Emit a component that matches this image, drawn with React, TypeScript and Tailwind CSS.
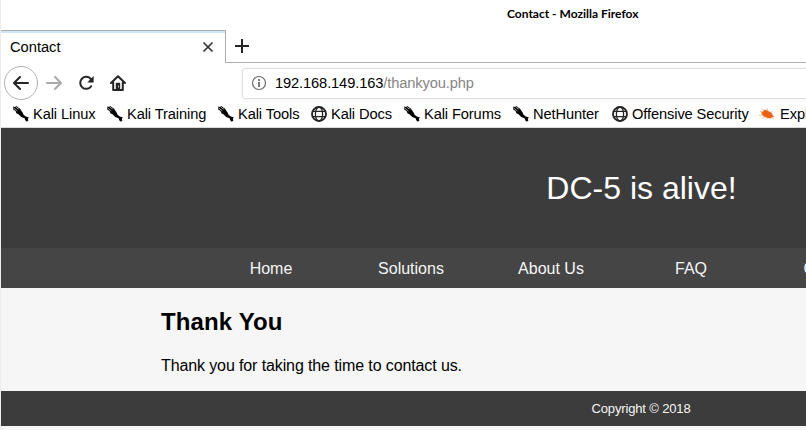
import type { ReactNode } from "react";

function KaliIcon() {
  return (
    <svg className="block h-4 w-4 shrink-0" viewBox="0 0 16 16">
      <path d="M0 .5 2 1l1.2-1L5 1.2l1.8 1 1.2 2 1.6 2.3 1 2.3 2.2 1.8 3.2.9-1.2 1.2.6 1.8-1.6 1.3-1.6-1.6-.6-2-3.4-1.3-2.4-2.4-2.4-1.2L2.6 5 .2 3.6z" fill="#050505" />
      <path d="M.2 1.6 4.4 5M2.6.8l2.8 2.4M4.8 1.3l1.6 1.4" stroke="#fff" strokeWidth=".6" fill="none" />
    </svg>
  );
}

function GlobeIcon() {
  return (
    <svg className="block h-4 w-4 shrink-0" viewBox="0 0 16 16" fill="none" stroke="#252525">
      <circle cx="8" cy="8" r="7" strokeWidth="1.9" />
      <ellipse cx="8" cy="8" rx="3.6" ry="7" strokeWidth="1.3" />
      <path d="M1.5 5.4h13M1.5 10.6h13" strokeWidth="1.3" />
    </svg>
  );
}

function ExploitIcon() {
  return (
    <svg className="-ml-px mr-px block h-4 w-4 shrink-0" viewBox="0 0 16 16">
      <path d="M.8 5 4 6.2M2.5 2.6 6 5.5M8 2l.6 3M0 9.7 4 8.5M3 12.6l3-2.1M8 13.3l1-1.5M13 4.7l-1 2.5M15.2 13 12 11" stroke="#f8b58e" strokeWidth=".9" />
      <path d="m2.2 6.5 2.6-1.4.8-1.6 3 1.2 2.2 1 2.4 2 .5 1.9 1.6 1.4-2.5.3-1 1.3-3-.6-4-1.4L3.2 8.8z" fill="#ec6316" />
    </svg>
  );
}

const bookmarks: { label: string; icon: ReactNode; width: string }[] = [
  { label: "Kali Linux", icon: <KaliIcon />, width: "w-[94px]" },
  { label: "Kali Training", icon: <KaliIcon />, width: "w-[111px]" },
  { label: "Kali Tools", icon: <KaliIcon />, width: "w-[93px]" },
  { label: "Kali Docs", icon: <GlobeIcon />, width: "w-[93px]" },
  { label: "Kali Forums", icon: <KaliIcon />, width: "w-[109px]" },
  { label: "NetHunter", icon: <KaliIcon />, width: "w-[99px]" },
  { label: "Offensive Security", icon: <GlobeIcon />, width: "w-[148px]" },
  { label: "Exploit-DB", icon: <ExploitIcon />, width: "w-[110px]" },
];

function TabStrip() {
  return (
    <div className="flex h-[33px]">
      <div className="flex h-[33px] w-[225px] shrink-0 items-center justify-between border-t border-r border-[#adadad] pr-[11px] pl-[9px] shadow-[inset_0_2px_0_#cce6fa]">
        <span className="leading-[33px]">Contact</span>
        <svg className="h-3 w-3" viewBox="0 0 12 12" stroke="#333" strokeWidth="1.7">
          <path d="m1.5 1.5 9 9m0-9-9 9" />
        </svg>
      </div>
      <div className="flex grow items-center border-b border-[#adadad] pl-[9px]">
        <svg className="h-[14px] w-[14px]" viewBox="0 0 14 14" stroke="#252525" strokeWidth="2">
          <path d="M7 0v14M0 7h14" />
        </svg>
      </div>
    </div>
  );
}

function Toolbar() {
  return (
    <div className="flex h-[38px] items-center pt-[2px] pl-[3px]">
      <div className="flex h-[34px] w-[34px] shrink-0 items-center justify-center rounded-full border border-[#b1b1b1]">
        <svg className="h-4 w-4" viewBox="0 0 16 16" fill="none" stroke="#252525" strokeWidth="2" strokeLinecap="round" strokeLinejoin="round">
          <path d="M15 8H1.5M7 2 1 8l6 6" />
        </svg>
      </div>
      <svg className="ml-2 h-4 w-4 shrink-0" viewBox="0 0 16 16" fill="none" stroke="#aaa" strokeWidth="2" strokeLinecap="round" strokeLinejoin="round">
        <path d="M1 8h13.5M9 2l6 6-6 6" />
      </svg>
      <svg className="ml-4 h-4 w-4 shrink-0" viewBox="0 0 16 16" fill="none" stroke="#252525" strokeWidth="2" strokeLinecap="round">
        <path d="M13 4.2A6 6 0 1 0 13.2 11.2" />
        <path d="M15.6 1v6.4H9.2z" fill="#252525" stroke="none" />
      </svg>
      <svg className="ml-4 h-4 w-4 shrink-0" viewBox="0 0 16 16" fill="none" stroke="#252525" strokeWidth="2" strokeLinecap="round" strokeLinejoin="round">
        <path d="m1 8 7-6.8L15 8M3.2 7.5V15h9.6V7.5" />
        <path d="M5.8 15V7.8h4.4V15z" fill="#252525" stroke="none" />
        <path d="M8.5 10.5v2" stroke="#bbb" strokeWidth="1" strokeLinecap="butt" />
      </svg>
      <div className="ml-[116px] flex h-[31px] w-[700px] shrink-0 items-center rounded-[3px] border border-[#dedede] pl-[8px] shadow-[0_1px_4px_rgba(0,0,0,0.06)]">
        <svg className="h-4 w-4 shrink-0" viewBox="0 0 16 16" fill="none" stroke="#6b6b6b">
          <circle cx="8" cy="8" r="6.5" strokeWidth="1.2" />
          <path d="M8 7v5M8 4v2" strokeWidth="1.8" />
        </svg>
        <span className="ml-[8px] tracking-[-0.12px] text-black">192.168.149.163</span>
        <span className="tracking-[-0.12px] text-[#858585]">/thankyou.php</span>
      </div>
    </div>
  );
}

const navigation = ["Home", "Solutions", "About Us", "FAQ", "Contact"];

export default function App() {
  return (
    <div className="h-[430px] w-[806px] overflow-hidden border-l border-[#ececec] bg-white font-['Liberation_Sans',Arial,sans-serif] text-black">
      <div className="w-[1280px]">
        <div className="h-[128px] text-[14.667px] leading-[17px]">
          <div className="flex h-[30px] items-center pl-[506px] font-['Lato',sans-serif] text-[12px] font-bold">
            <span className="-mt-[3px]">Contact - Mozilla Firefox</span>
          </div>
          <TabStrip />
          <Toolbar />
          <div className="flex h-[27px] items-center border-b border-[#d9d9d9] pl-3">
            {bookmarks.map((bookmark) => (
              <div key={bookmark.label} className={`flex shrink-0 items-center gap-1 tracking-[-0.11px] whitespace-nowrap ${bookmark.width}`}>
                {bookmark.icon}
                <span>{bookmark.label}</span>
              </div>
            ))}
          </div>
        </div>

        <header className="flex h-[120px] items-center justify-center bg-[#3c3c3c] pl-px text-[32px] text-white">
          <h1>DC-5 is alive!</h1>
        </header>
        <nav className="flex h-10 items-center bg-[#454545] pt-[2px] pl-[200px] text-base text-[#f6f6f6]">
          {navigation.map((item) => (
            <span key={item} className="w-[140px] text-center">{item}</span>
          ))}
        </nav>
        <main className="h-[103px] bg-[#f6f6f6] pt-5 pl-[160px]">
          <h2 className="text-2xl leading-[27px] font-bold tracking-[0.12px]">Thank You</h2>
          <p className="mt-[22px] text-base leading-[18px] tracking-[-0.115px]">Thank you for taking the time to contact us.</p>
        </main>
        <footer className="flex h-[35px] items-center justify-center bg-[#3c3c3c] text-[13px] tracking-[-0.15px] text-[#f6f6f6]">
          Copyright © 2018
        </footer>
        <div className="h-1 bg-[#f6f6f6]" />
      </div>
    </div>
  );
}
